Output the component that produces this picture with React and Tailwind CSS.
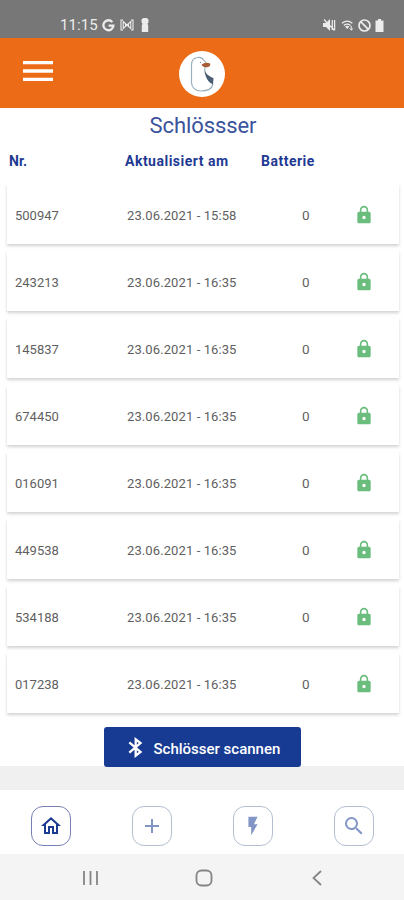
import React, { useState } from 'react';
import { MdMenu, MdLock, MdOutlineHome, MdAdd, MdFlashOn, MdSearch } from 'react-icons/md';

const locks = [
    { nr: '500947', updated: '23.06.2021 - 15:58', battery: 0 },
    { nr: '243213', updated: '23.06.2021 - 16:35', battery: 0 },
    { nr: '145837', updated: '23.06.2021 - 16:35', battery: 0 },
    { nr: '674450', updated: '23.06.2021 - 16:35', battery: 0 },
    { nr: '016091', updated: '23.06.2021 - 16:35', battery: 0 },
    { nr: '449538', updated: '23.06.2021 - 16:35', battery: 0 },
    { nr: '534188', updated: '23.06.2021 - 16:35', battery: 0 },
    { nr: '017238', updated: '23.06.2021 - 16:35', battery: 0 },
];

const tabs = [
    { id: 'home', label: 'Home', Icon: MdOutlineHome, size: 24 },
    { id: 'add', label: 'Hinzufügen', Icon: MdAdd, size: 24 },
    { id: 'flash', label: 'Blitz', Icon: MdFlashOn, size: 22 },
    { id: 'search', label: 'Suche', Icon: MdSearch, size: 24 },
];

function StatusBar() {
    return (
        <div className="flex h-[38px] shrink-0 items-start justify-between bg-[#777777] pt-[17px] pr-[20px] pl-[60px] text-[#ececec]">
            <div className="flex h-4 items-center">
                <span className="w-[38px] text-[15px] leading-4 tracking-[0.1px] whitespace-nowrap">11:15</span>
                <svg className="ml-[4px]" width="13" height="13" viewBox="0 0 13 13" fill="none" stroke="currentColor" strokeWidth="2.3">
                    <path d="M10.3 3.1A5 5 0 1 0 11.4 6.6H6.6" />
                </svg>
                <svg className="ml-[5px]" width="14" height="12" viewBox="0 0 14 12" fill="none" stroke="currentColor" strokeWidth="1.1">
                    <path d="M3 1H1v10h2M11 1h2v10h-2M3.2 2.5v7L10.8 2.5v7z" />
                    <path d="M5 6h4" strokeWidth="2" />
                </svg>
                <svg className="ml-[7px]" width="8" height="14" viewBox="0 0 8 14" fill="currentColor">
                    <path d="M2.2 0h3.6L7.5 1.500v3L6.300 6l.9 1v7H.8V7l.9-1L.5 4.500v-3z" />
                </svg>
            </div>
            <div className="flex h-4 items-center">
                <svg width="13" height="12" viewBox="0 0 13 12" fill="none" stroke="currentColor" strokeWidth="1.3">
                    <path d="M0 4h3l4-4v12L3 8H0z" fill="currentColor" stroke="none" />
                    <path d="M1 .5l10.5 11M9.3 1v10M11.6 1v10" />
                </svg>
                <svg className="ml-[5px]" width="13" height="12" viewBox="0 0 13 12" fill="none" stroke="currentColor" strokeWidth="1.3">
                    <path d="M1 4.2q5.2-4 10.4 0M2.8 6.4q3.4-2.600 6.8 0" />
                    <path d="M4 7.5q2.2-1.500 4.4 0L6.2 10z" fill="currentColor" stroke="none" />
                    <path d="M10.3 7v4M8.5 9.5l1.8 1.5 1.8-1.5" strokeWidth="1" />
                </svg>
                <svg className="ml-[4px]" width="13" height="13" viewBox="0 0 13 13" fill="none" stroke="currentColor" strokeWidth="1.7">
                    <circle cx="6.5" cy="6.5" r="5.5" />
                    <path d="M2.7 2.7l7.6 7.6" />
                </svg>
                <svg className="ml-[4px]" width="9" height="13" viewBox="0 0 9 13" fill="currentColor">
                    <path d="M3 0h3v1.5h2.500V13H.5V1.5H3z" />
                </svg>
            </div>
        </div>
    );
}

function Logo() {
    return (
        <svg width="46" height="46" viewBox="0 0 46 46" fill="none">
            <circle cx="23" cy="23" r="23" fill="#ffffff" />
            <path d="M25 9.5C23.5 7 21 6 18.5 6.5C14.5 7 12.500 10 12.5 14V31.5C12.5 36.5 16.5 40 22 40C28 40 33 37.5 34 33" stroke="#9aaebb" strokeWidth="1.2" />
            <path d="M25 9.5C27 10.5 27.500 12 26.500 15C25 18 25.500 20 26.500 23" stroke="#9db5bd" strokeWidth="1.1" />
            <circle cx="21.5" cy="11.5" r=".7" fill="#8598a5" />
            <path d="M22.5 14C24.5 11.8 28 11.3 31 12.5C32 14.3 30.300 16.300 27.500 16.300C25.500 16.300 23.500 15.500 22.5 14Z" fill="#a85c38" />
            <path d="M25.800 19C26.500 23 30.5 25.5 34.5 27L34 33.500C29.5 31.5 25.800 26.500 25.800 19Z" fill="#4a5d72" />
        </svg>
    );
}

function Header() {
    return (
        <header className="grid h-[70px] shrink-0 grid-cols-3 items-center bg-[#ec6b16]">
            <button className="ml-[18px] w-10 text-white" aria-label="Menü">
                <MdMenu size={40} className="-mt-[5px]" />
            </button>
            <div className="flex justify-center pt-[2px]">
                <Logo />
            </div>
        </header>
    );
}

function BluetoothIcon() {
    return (
        <svg width="15" height="21" viewBox="0 0 15 21" fill="none" stroke="currentColor" strokeWidth="2.3">
            <path d="M1.300 5.300L12.500 15 7.700 18.700V2.300L12.500 6 1.300 15.700" />
        </svg>
    );
}

function LockRow({ lock }) {
    return (
        <li className="flex h-[60px] items-center bg-white pt-[3px] pl-2 text-[13px] text-[#5f5f5f] shadow-[0_2px_3px_rgba(0,0,0,0.18)]">
            <span className="w-[112px]">{lock.nr}</span>
            <span className="w-[154px] tracking-[0.1px] whitespace-nowrap">{lock.updated}</span>
            <span className="w-[66px] pl-[21px] text-[13.5px]">{lock.battery}</span>
            <MdLock size={20} className="-mt-[2px] ml-[7px] text-[#6abd7c]" />
        </li>
    );
}

function TabBar({ active, onSelect }) {
    return (
        <nav className="flex h-16 shrink-0 items-center justify-between bg-white pt-2 pr-[30px] pl-[31px]">
            {tabs.map(({ id, label, Icon, size }) => (
                <button
                    key={id}
                    aria-label={label}
                    onClick={() => onSelect(id)}
                    className={`flex h-10 w-10 items-center justify-center rounded-xl border ${active === id ? 'border-[#7780b4] text-[#1c3b92]' : 'border-[#b3bfd0] text-[#8296c6]'}`}
                >
                    <Icon size={size} />
                </button>
            ))}
        </nav>
    );
}

function SystemBar() {
    return (
        <div className="flex h-[46px] shrink-0 items-center justify-between bg-[#f4f4f4] pt-[2px] pr-[77px] pl-[82px] text-[#858585]">
            <svg width="17" height="18" viewBox="0 0 17 18" fill="none" stroke="currentColor" strokeWidth="1.8">
                <path d="M2 2v14M8.5 2v14M15 2v14" />
            </svg>
            <svg width="18" height="18" viewBox="0 0 18 18" fill="none" stroke="currentColor" strokeWidth="1.8">
                <rect x="1.5" y="1.5" width="15" height="15" rx="5" />
            </svg>
            <svg width="18" height="18" viewBox="0 0 18 18" fill="none" stroke="currentColor" strokeWidth="1.8">
                <path d="M12 2L4.5 9l7.5 7" />
            </svg>
        </div>
    );
}

function App() {
    const [tab, setTab] = useState('home');

    return (
        <div className="flex h-[900px] w-[404px] flex-col overflow-hidden bg-[#f0f0f0] font-['Roboto',sans-serif]">
            <StatusBar />
            <Header />
            <main className="flex h-[658px] shrink-0 flex-col bg-white">
                <h1 className="pt-1 pl-[2px] text-center text-[22px] leading-7 tracking-[-0.1px] text-[#3a539c]">Schlössser</h1>
                <div className="mt-[11px] flex h-5 items-center pl-[9px] text-[14px] font-bold whitespace-nowrap text-[#1f3a93]">
                    <span className="w-[116px]">Nr.</span>
                    <span className="w-[136px] tracking-[0.5px]">Aktualisiert am</span>
                    <span className="tracking-[0.5px]">Batterie</span>
                </div>
                {/* Lock list */}
                <ul className="mt-[13px] flex flex-col gap-[7px] pr-[5px] pl-[7px]">
                    {locks.map((lock) => (
                        <LockRow key={lock.nr} lock={lock} />
                    ))}
                </ul>
                <button className="mx-auto mt-[14px] flex h-10 w-[197px] shrink-0 items-center rounded-[3px] bg-[#173b93] pl-6 text-white">
                    <BluetoothIcon />
                    <span className="mt-[4px] ml-[11px] text-[15px] font-medium whitespace-nowrap">Schlösser scannen</span>
                </button>
            </main>
            <div className="h-6 shrink-0" />
            <TabBar active={tab} onSelect={setTab} />
            <SystemBar />
        </div>
    );
}

export default App;
